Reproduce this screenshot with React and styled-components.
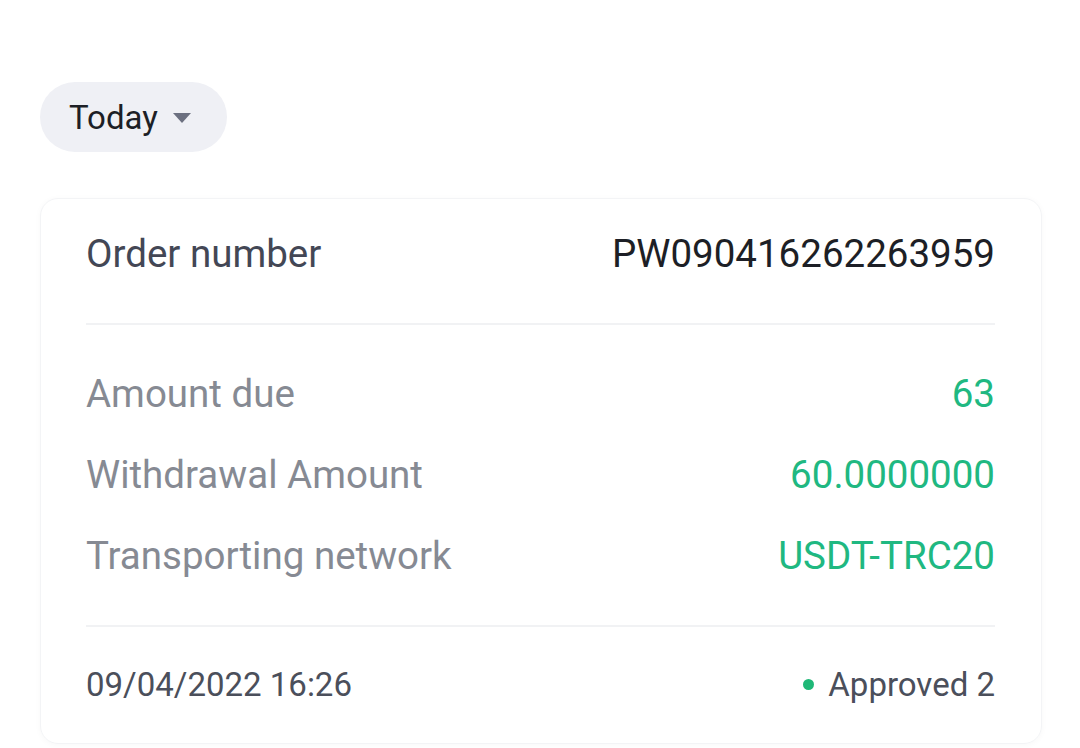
import styled, { createGlobalStyle } from "styled-components";

const GlobalStyle = createGlobalStyle`
  body {
    margin: 0;
    background: #ffffff;
    font-family: Roboto, "Liberation Sans", sans-serif;
  }
`;

const Page = styled.div`
  width: 1080px;
  height: 748px;
  padding: 82px 38px 0 40px;
  box-sizing: border-box;
  overflow: hidden;
`;

const FilterPill = styled.button`
  display: flex;
  align-items: center;
  gap: 15px;
  height: 70px;
  padding: 0 36px 0 29px;
  border: none;
  border-radius: 35px;
  background: #eff0f5;
  font-family: inherit;
  font-size: 33px;
  color: #1d1f26;
`;

const Caret = styled.span`
  width: 0;
  height: 0;
  border-left: 9px solid transparent;
  border-right: 9px solid transparent;
  border-top: 10px solid #6c7080;
  margin-top: 2px;
`;

const Card = styled.div`
  margin-top: 46px;
  height: 546px;
  box-sizing: border-box;
  border: 1px solid #f3f4f6;
  border-radius: 18px;
  box-shadow: 0 1px 6px rgba(0, 0, 0, 0.03);
  padding: 0 46px 0 45px;
  display: flex;
  flex-direction: column;
`;

const Section = styled.div`
  display: flex;
  flex-direction: column;
  gap: ${(p) => p.gap || 0}px;
  padding: ${(p) => p.pad || "0"};
  border-bottom: ${(p) => (p.divider ? "2px solid #f1f2f4" : "none")};
`;

const Row = styled.div`
  display: flex;
  justify-content: space-between;
  align-items: center;
  height: ${(p) => p.h || 48}px;
`;

const Label = styled.span`
  font-size: ${(p) => p.size || 38.5}px;
  color: ${(p) => p.color || "#868a93"};
`;

const Value = styled.span`
  font-size: ${(p) => p.size || 38.5}px;
  color: ${(p) => p.color || "#1d1f26"};
  display: flex;
  align-items: center;
  gap: 14px;
`;

const Dot = styled.span`
  width: 11px;
  height: 11px;
  border-radius: 50%;
  background: #1fb877;
`;

const green = "#20b881";

export default function App() {
  return (
    <>
      <GlobalStyle />
      <Page>
        <FilterPill>
          Today
          <Caret />
        </FilterPill>
        <Card>
          <Section divider pad="30px 0 46px">
            <Row>
              <Label color="#434755">Order number</Label>
              <Value>PW090416262263959</Value>
            </Row>
          </Section>
          <Section divider gap="33" pad="44px 0 46px">
            <Row>
              <Label>Amount due</Label>
              <Value color={green}>63</Value>
            </Row>
            <Row>
              <Label>Withdrawal Amount</Label>
              <Value color={green}>60.0000000</Value>
            </Row>
            <Row>
              <Label>Transporting network</Label>
              <Value color={green}>USDT-TRC20</Value>
            </Row>
          </Section>
          <Section pad="33px 0 0">
            <Row>
              <Label size="33" color="#4b4f5b">09/04/2022 16:26</Label>
              <Value size="33" color="#4b4f5b">
                <Dot />
                Approved 2
              </Value>
            </Row>
          </Section>
        </Card>
      </Page>
    </>
  );
}
